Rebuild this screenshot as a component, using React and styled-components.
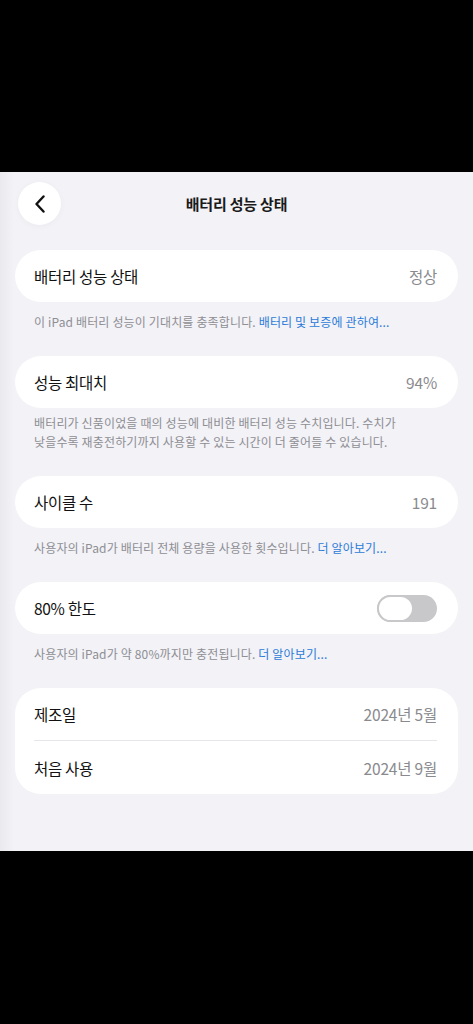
import React from "react";
import styled, { createGlobalStyle } from "styled-components";

const GlobalStyle = createGlobalStyle`
  html, body {
    margin: 0;
    padding: 0;
    background: #000;
  }
  body {
    font-family: "Noto Sans CJK KR", "Noto Sans", sans-serif;
    -webkit-font-smoothing: antialiased;
  }
`;

const Page = styled.div`
  width: 473px;
  height: 1024px;
  background: #000;
  display: flex;
  flex-direction: column;
  overflow: hidden;
`;

const Screen = styled.div`
  margin-top: 172px;
  height: 679px;
  background: linear-gradient(to right, #e9e9ee 0px, #f2f2f7 14px, #f2f2f7 100%);
  padding: 10px 15px 0;
  box-sizing: border-box;
  display: flex;
  flex-direction: column;
`;

const Header = styled.div`
  position: relative;
  height: 43px;
  display: flex;
  align-items: center;
  justify-content: center;
  margin-bottom: 25px;
`;

const BackButton = styled.button`
  position: absolute;
  left: 3px;
  top: 0;
  width: 43px;
  height: 43px;
  border-radius: 50%;
  border: none;
  background: #fff;
  box-shadow: 0 1px 6px rgba(0, 0, 0, 0.04);
  display: flex;
  align-items: center;
  justify-content: center;
  padding: 0;
`;

const Title = styled.h1`
  margin: 0;
  font-size: 15px;
  font-weight: 700;
  color: #1a1a1a;
  letter-spacing: -0.2px;
`;

const Section = styled.div`
  display: flex;
  flex-direction: column;
  margin-bottom: ${(p) => (p.$last ? 0 : 25)}px;
`;

const Card = styled.div`
  background: #fff;
  border-radius: 26px;
  padding: 0 21px 0 19px;
  display: flex;
  flex-direction: column;
`;

const Row = styled.div`
  height: ${(p) => p.$h || 52}px;
  display: flex;
  align-items: center;
  justify-content: space-between;
  border-bottom: ${(p) => (p.$divider ? "1px solid #e6e6ea" : "none")};
  box-sizing: border-box;
`;

const Label = styled.span`
  font-size: 15.5px;
  color: #111;
  letter-spacing: -0.3px;
`;

const Value = styled.span`
  font-size: 15.5px;
  color: #8a8a8e;
  letter-spacing: -0.2px;
`;

const Footer = styled.p`
  margin: 0;
  padding: ${(p) => (p.$tight ? 5 : 10)}px 19px 0;
  font-size: 12px;
  line-height: 19px;
  color: #8e8e93;
  letter-spacing: 0.15px;
  white-space: nowrap;
`;

const Link = styled.span`
  color: #2b7bd8;
`;

const Toggle = styled.div`
  width: 60px;
  height: 27px;
  border-radius: 14px;
  background: #c8c8cb;
  display: flex;
  align-items: center;
`;

const Knob = styled.div`
  width: 37px;
  height: 27px;
  box-sizing: border-box;
  border-radius: 14px;
  border: 2px solid #c8c8cb;
  background: #fff;
`;

const Chevron = () => (
  <svg width="12" height="18" viewBox="0 0 12 18" fill="none">
    <path
      d="M9.5 1.5L2.5 9l7 7.5"
      stroke="#111"
      strokeWidth="2.4"
      strokeLinecap="round"
      strokeLinejoin="round"
    />
  </svg>
);

export default function App() {
  return (
    <Page>
      <GlobalStyle />
      <Screen>
        <Header>
          <BackButton aria-label="뒤로">
            <Chevron />
          </BackButton>
          <Title>배터리 성능 상태</Title>
        </Header>

        <Section>
          <Card>
            <Row>
              <Label>배터리 성능 상태</Label>
              <Value>정상</Value>
            </Row>
          </Card>
          <Footer>
            이 iPad 배터리 성능이 기대치를 충족합니다.{" "}
            <Link>배터리 및 보증에 관하여...</Link>
          </Footer>
        </Section>

        <Section>
          <Card>
            <Row>
              <Label>성능 최대치</Label>
              <Value>94%</Value>
            </Row>
          </Card>
          <Footer $tight>
            배터리가 신품이었을 때의 성능에 대비한 배터리 성능 수치입니다. 수치가
            <br />
            낮을수록 재충전하기까지 사용할 수 있는 시간이 더 줄어들 수 있습니다.
          </Footer>
        </Section>

        <Section>
          <Card>
            <Row>
              <Label>사이클 수</Label>
              <Value>191</Value>
            </Row>
          </Card>
          <Footer>
            사용자의 iPad가 배터리 전체 용량을 사용한 횟수입니다.{" "}
            <Link>더 알아보기...</Link>
          </Footer>
        </Section>

        <Section>
          <Card>
            <Row>
              <Label>80% 한도</Label>
              <Toggle>
                <Knob />
              </Toggle>
            </Row>
          </Card>
          <Footer>
            사용자의 iPad가 약 80%까지만 충전됩니다. <Link>더 알아보기...</Link>
          </Footer>
        </Section>

        <Section $last>
          <Card>
            <Row $h={53} $divider>
              <Label>제조일</Label>
              <Value>2024년 5월</Value>
            </Row>
            <Row $h={53}>
              <Label>처음 사용</Label>
              <Value>2024년 9월</Value>
            </Row>
          </Card>
        </Section>
      </Screen>
    </Page>
  );
}
